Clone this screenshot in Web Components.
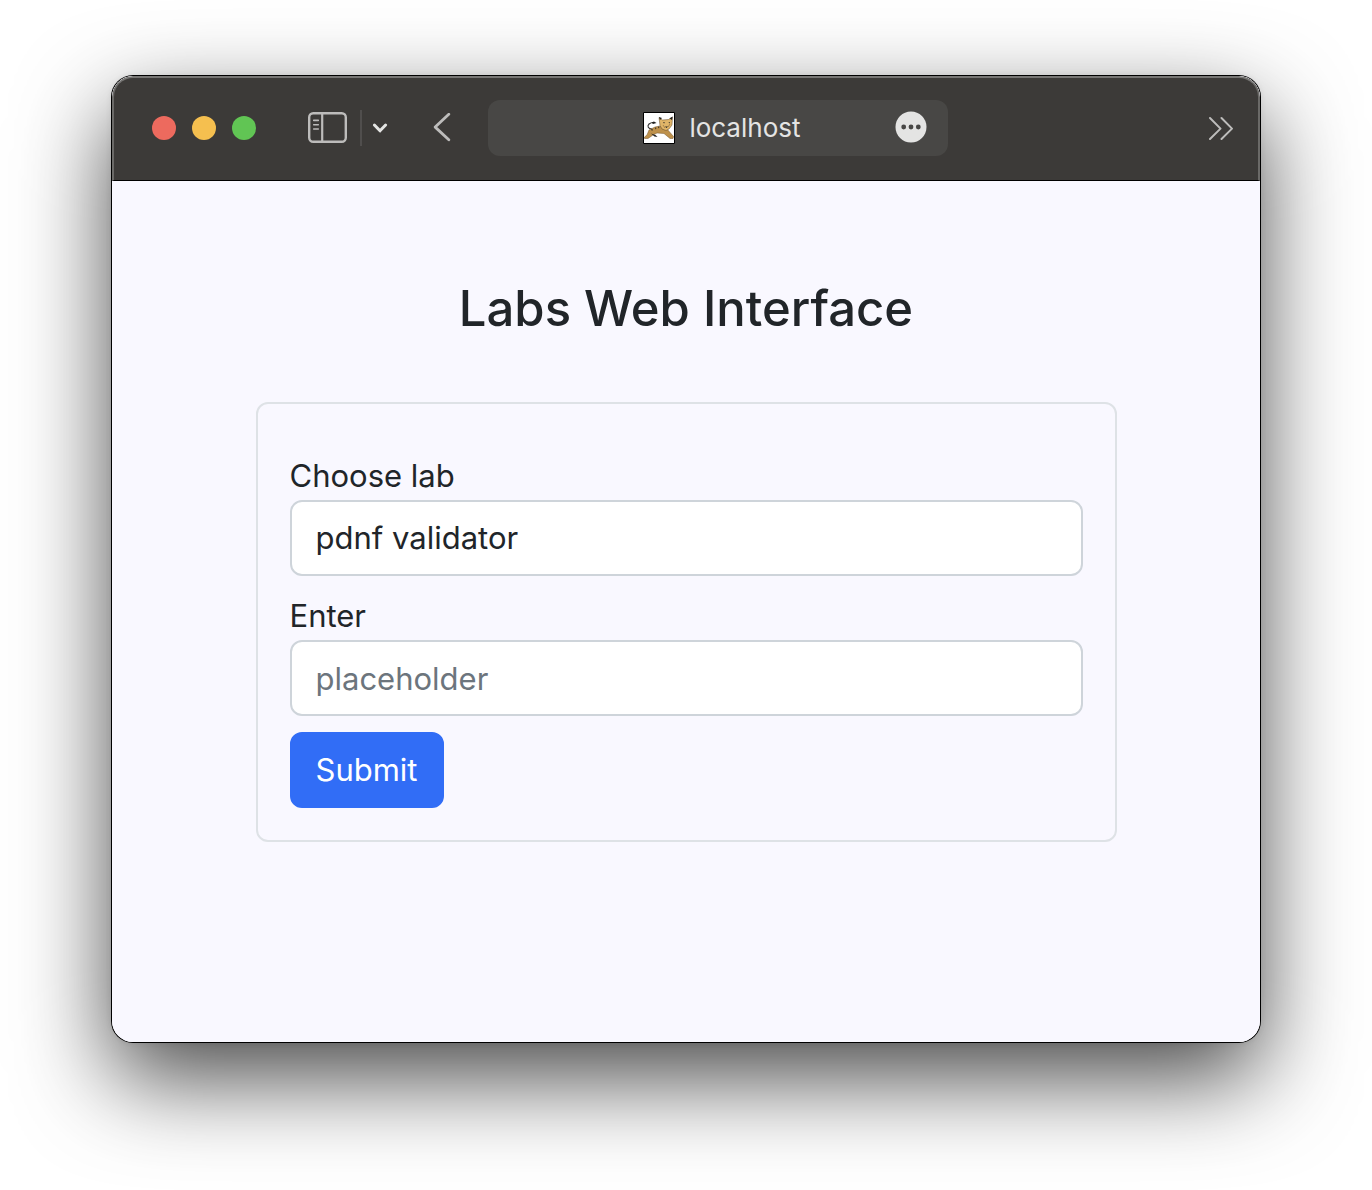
<!DOCTYPE html>
<html lang="en">
<head>
<meta charset="utf-8">
<title>Labs Web Interface</title>
<style>
  body { margin: 0; background: #fff; color: #212529; font-family: Inter, "Liberation Sans", sans-serif; font-size: 31px; line-height: 48px; }
</style>
</head>
<body>
<browser-window>
  <browser-toolbar slot="toolbar">localhost</browser-toolbar>
  <labs-page>
    <span slot="title">Labs Web Interface</span>
    <lab-form></lab-form>
  </labs-page>
</browser-window>

<script>
class ShadowElement extends HTMLElement {
  constructor() {
    super();
    this.attachShadow({ mode: "open" }).innerHTML = this.constructor.markup;
  }
}

customElements.define("browser-window", class extends ShadowElement {
  static markup = `
    <style>
      :host { display: block; padding: 76px 112px 148px; }
      .window { border-radius: 21px; background: #f9f8ff; overflow: hidden; }
      .frame { border-radius: 21px; box-shadow: 0 0 0 1px #000, 0 0 6px rgba(0,0,0,.1), 0 36px 94px rgba(0,0,0,.72); }
    </style>
    <div class="frame"><div class="window">
      <slot name="toolbar"></slot>
      <slot></slot>
    </div></div>`;
});

customElements.define("browser-toolbar", class extends ShadowElement {
  static markup = `
    <style>
      :host { display: block; color: #e4e4e3; font-size: 26px; line-height: 56px; }
      header { box-sizing: border-box; display: flex; align-items: center; height: 105px;
        padding: 0 24px 2px 38px; background: #3c3a38; border: 2px solid #6b6a68; border-bottom: 1px solid #000;
        border-top-color: #777674; border-radius: 21px 21px 0 0; }
      button { display: flex; padding: 0; border: 0; background: none; color: #bdbcbb; }
      svg { display: block; }
      .lights { display: flex; gap: 16px; margin-right: 52px; }
      .lights button { width: 24px; height: 24px; border-radius: 50%; }
      .close { background: #ed6a5e; } .min { background: #f5bf4f; } .max { background: #61c554; }
      .divider { width: 2px; height: 36px; background: #504e4d; margin: 0 10px 0 13px; }
      .back { margin: 0 37px 0 45px; }
      .address { box-sizing: border-box; width: 42.5%; height: 56px; border-radius: 12px; background: #484745;
        display: grid; grid-template-columns: 1fr auto 1fr; align-items: center; padding: 0 21px 0 29px; }
      .site { grid-column: 2; display: flex; align-items: center; gap: 14px; }
      .more { justify-self: end; }
      .overflow { margin-left: auto; }
    </style>
    <header>
      <div class="lights">
        <button class="close" aria-label="Close"></button>
        <button class="min" aria-label="Minimize"></button>
        <button class="max" aria-label="Zoom"></button>
      </div>
      <button aria-label="Sidebar">
        <svg width="39" height="32" viewBox="0 0 39 32" fill="none" stroke="currentColor" stroke-linecap="round">
          <rect x="1.2" y="1.2" width="36.6" height="28.6" rx="4" stroke-width="2.4"/>
          <path d="M14.2 1.5v28" stroke-width="2.2"/><path d="M5.7 8.4h4.6M5.7 12.7h4.6M5.7 17h4.6" stroke-width="1.6"/>
        </svg>
      </button>
      <div class="divider"></div>
      <button aria-label="Tab groups">
        <svg width="16" height="14" viewBox="0 0 16 14" fill="none" stroke="#e4e4e3" stroke-width="3" stroke-linecap="round" stroke-linejoin="round"><path d="M2.4 4 8 9.8 13.6 4"/></svg>
      </button>
      <button class="back" aria-label="Back">
        <svg width="18" height="30" viewBox="0 0 18 30" fill="none" stroke="currentColor" stroke-width="2.8" stroke-linecap="round" stroke-linejoin="round"><path d="M15.8 1.3 2.2 14.1 15.8 26.7"/></svg>
      </button>
      <div class="address">
        <span class="site">
          <svg width="32" height="32" viewBox="0 0 32 32">
            <path fill="#fff" stroke="#000" d="M.5.5h31v31H.5z"/>
            <path fill="none" stroke="#333" stroke-width="1.1" d="M9 17C5 17 4 14 6 12 7.500 10.500 9 10.500 11 10.500"/>
            <path fill="#222" d="M8.500 10.500 11 9.500 13.500 11 10 12z"/>
            <path fill="#be914b" stroke="#76562c" stroke-width=".5" d="M6 18 12 15 17 14 24 17 30.500 24.500 30 26.500 27 26.500 21 21.500 14 21 10 23 5 26.500 1.500 26.500 1.500 25 4 23z"/>
            <path fill="#e0b568" stroke="#5c4628" stroke-width=".5" d="M17 13.500 16 5.500 19.500 8 25.500 7.500 29.500 5 29 13 26 17 23 18.500 19 17z"/>
            <path fill="#222" d="m16 5 3 1-2 2zm13.500-.5-3 2 2.500 1.500zM20 10l2 .5-1 1zm5.500.5 1.500-.5-.5 1.500zM22 14.500h3l-1.500 1.500zM8 17l2 .5-1 1.500zm4-1.500 1.500.5-1 1.500zm3-1 1.500.5-1 1.500zM8 21.500l4.500 1.500 2 2-3-.5z"/>
            <path fill="none" stroke="#805e32" stroke-width=".6" d="m20 13 2 3m5-4-2 3"/>
          </svg>
          <slot></slot>
        </span>
        <button class="more" aria-label="Page menu">
          <svg width="32" height="34" viewBox="0 0 32 34"><circle cx="16" cy="16" r="15.5" fill="#e4e4e3"/><g fill="#484745"><circle cx="8.7" cy="16" r="2.4"/><circle cx="16" cy="16" r="2.4"/><circle cx="23.3" cy="16" r="2.4"/></g></svg>
        </button>
      </div>
      <button class="overflow" aria-label="More">
        <svg width="26" height="24" viewBox="0 0 26 24" fill="none" stroke="currentColor" stroke-width="2" stroke-linecap="round" stroke-linejoin="round"><path d="M2 2 12.5 12.6 2 23M13.5 2 24 12.6 13.5 23"/></svg>
      </button>
    </header>`;
});

customElements.define("labs-page", class extends ShadowElement {
  static markup = `
    <style>
      :host { display: block; }
      main { display: flex; flex-direction: column; align-items: center; gap: 62px; padding: 96px 0 200px; }
      h1 { margin: 0; font-size: 49px; line-height: 63px; font-weight: 500; text-align: center; }
      .content { width: 75%; }
    </style>
    <main><h1><slot name="title"></slot></h1><div class="content"><slot></slot></div></main>`;
});

customElements.define("lab-form", class extends ShadowElement {
  static markup = `
    <style>
      :host { display: block; }
      form { display: flex; flex-direction: column; gap: 16px; padding: 48px 32px 32px; border: 2px solid #dee2e6; border-radius: 12px; }
      label { display: block; }
      input, select, button { box-sizing: border-box; height: 76px; margin: 0; padding: 0 24px; border: 2px solid #ced4da;
        border-radius: 12px; font: inherit; color: inherit; }
      input, select { display: block; width: 100%; background: #fff; appearance: none; }
      input::placeholder { color: #6c757d; opacity: 1; }
      button { align-self: flex-start; border-color: #316df6; background: #316df6; color: #fff; }
    </style>
    <form>
      <div><label for="lab">Choose lab</label><select id="lab"><option>pdnf validator</option></select></div>
      <div><label for="value">Enter</label><input id="value" type="text" placeholder="placeholder"></div>
      <button type="button">Submit</button>
    </form>`;
});
</script>
</body>
</html>
